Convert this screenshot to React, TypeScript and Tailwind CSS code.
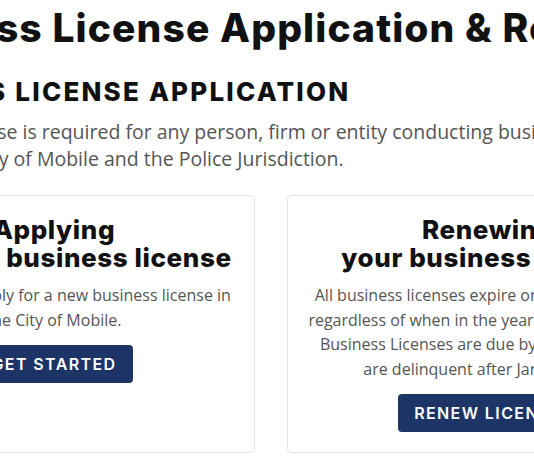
import React from 'react';

const heading = "font-['Inter','Liberation_Sans',sans-serif]";
const body = "font-['Open_Sans','Liberation_Sans',sans-serif]";

type CardProps = {
  title: React.ReactNode;
  text: React.ReactNode;
  action: string;
};

const LicenseCard: React.FC<CardProps> = ({ title, text, action }) => (
  <div className="flex flex-col items-center rounded-[5px] border border-[#e4e4e4] bg-white px-2 pt-5 pb-5 text-center">
    <h3
      className={`${heading} whitespace-nowrap text-[26px] leading-[28px] font-extrabold tracking-[0.6px] text-[#111]`}
    >
      {title}
    </h3>
    <p className={`${body} mt-[11px] whitespace-nowrap text-[16px] leading-[24.5px] text-[#555]`}>{text}</p>
    <button
      className={`${heading} mt-[13px] h-[38px] whitespace-nowrap rounded-[4px] bg-[#1c3466] px-4 text-[16px] font-semibold tracking-[1.4px] text-white`}
    >
      {action}
    </button>
  </div>
);

export default function App() {
  return (
    <div className="h-[462px] w-[534px] overflow-hidden bg-white">
      <div className="-ml-[147px] w-[836px]">
        <h1
          className={`${heading} whitespace-nowrap pt-[4px] pl-[4px] text-[39px] leading-[48px] font-extrabold tracking-[1.1px] text-[#111]`}
        >
          Business License Application &amp; Renewal
        </h1>
        <h2
          className={`${heading} mt-[24px] whitespace-nowrap pl-[6px] text-[26px] leading-[32px] font-extrabold tracking-[2.2px] text-[#111]`}
        >
          BUSINESS LICENSE APPLICATION
        </h2>
        <p className={`${body} mt-[10px] whitespace-nowrap text-[19.5px] leading-[27px] text-[#555]`}>
          A business license is required for any person, firm or entity conducting business
          <br />
          within all the City of Mobile and the Police Jurisdiction.
        </p>
        <div className="mt-[23px] grid grid-cols-2 gap-8">
          <LicenseCard
            title={
              <>
                Applying
                <br />
                for a new business license
              </>
            }
            text={
              <>
                Click here to apply for a new business license in
                <br />
                the City of Mobile.
              </>
            }
            action="GET STARTED"
          />
          <LicenseCard
            title={
              <>
                Renewing
                <br />
                your business license
              </>
            }
            text={
              <>
                All business licenses expire on December 31st,
                <br />
                regardless of when in the year they were issued.
                <br />
                Business Licenses are due by January 1st and
                <br />
                are delinquent after January 31st.
              </>
            }
            action="RENEW LICENSE"
          />
        </div>
      </div>
    </div>
  );
}
